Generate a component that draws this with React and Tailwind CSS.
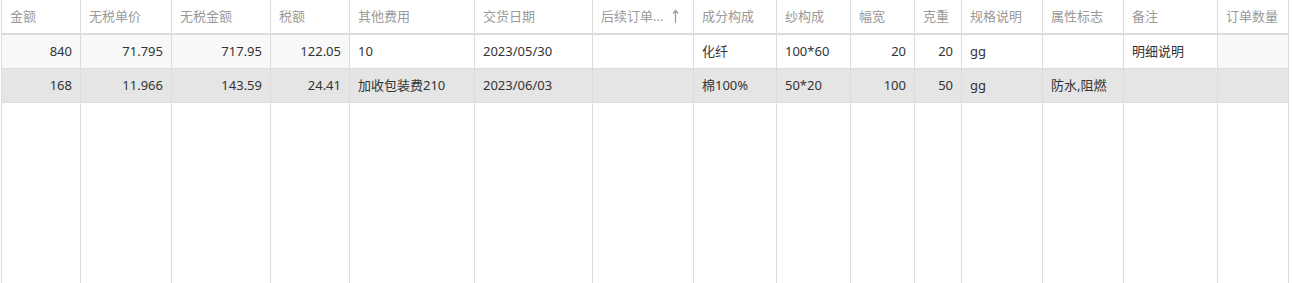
import React from "react";

const columns = [
  { key: "amount", title: "金额", width: "w-[79px]", align: "right", shade: true },
  { key: "price", title: "无税单价", width: "w-[91px]", align: "right", shade: true },
  { key: "net", title: "无税金额", width: "w-[99px]", align: "right", shade: true },
  { key: "tax", title: "税额", width: "w-[79px]", align: "right", shade: true },
  { key: "other", title: "其他费用", width: "w-[125px]" },
  { key: "date", title: "交货日期", width: "w-[118px]" },
  { key: "next", title: "后续订单号", width: "w-[101px]", sort: true },
  { key: "comp", title: "成分构成", width: "w-[83px]" },
  { key: "yarn", title: "纱构成", width: "w-[74px]" },
  { key: "wide", title: "幅宽", width: "w-[64px]", align: "right" },
  { key: "gram", title: "克重", width: "w-[47px]", align: "right" },
  { key: "spec", title: "规格说明", width: "w-[81px]" },
  { key: "attr", title: "属性标志", width: "w-[81px]" },
  { key: "note", title: "备注", width: "w-[94px]" },
  { key: "qty", title: "订单数量", width: "w-[71px]", shade: true },
];

const rows = [
  {
    amount: "840",
    price: "71.795",
    net: "717.95",
    tax: "122.05",
    other: "10",
    date: "2023/05/30",
    next: "",
    comp: "化纤",
    yarn: "100*60",
    wide: "20",
    gram: "20",
    spec: "gg",
    attr: "",
    note: "明细说明",
    qty: "",
  },
  {
    amount: "168",
    price: "11.966",
    net: "143.59",
    tax: "24.41",
    other: "加收包装费210",
    date: "2023/06/03",
    next: "",
    comp: "棉100%",
    yarn: "50*20",
    wide: "100",
    gram: "50",
    spec: "gg",
    attr: "防水,阻燃",
    note: "",
    qty: "",
    selected: true,
  },
];

const SortUp = () => (
  <svg width="9" height="15" viewBox="0 0 9 15" className="shrink-0">
    <path d="M4.5 1.5 V14" stroke="#9a9a9a" strokeWidth="1.2" />
    <path d="M2 4.5 L4.5 1.5 L7 4.5" stroke="#9a9a9a" strokeWidth="1.2" fill="none" />
  </svg>
);

export default function App() {
  return (
    <div
      className="h-[283px] w-[1292px] bg-white overflow-hidden text-[13px]"
      style={{ fontFamily: '"Noto Sans", "Noto Sans CJK SC", sans-serif' }}
    >
      <div className="flex h-full ml-px border-l border-[#dcdcdc] w-fit">
        {columns.map((col) => (
          <div
            key={col.key}
            className={`${col.width} shrink-0 flex flex-col border-r border-[#dcdcdc]`}
          >
            <div className="h-[35px] border-b-2 border-[#dcdcdc] flex items-center px-2 text-[#9a9a9a]">
              {col.sort ? (
                <div className="flex items-center w-full gap-2 pr-1">
                  <span className="truncate">后续订单...</span>
                  <SortUp />
                </div>
              ) : (
                <span className="whitespace-nowrap">{col.title}</span>
              )}
            </div>
            {rows.map((row, i) => (
              <div
                key={i}
                className={`h-[34px] border-b border-[#dcdcdc] flex items-center px-2 text-[#333] whitespace-nowrap ${
                  col.align === "right" ? "justify-end" : ""
                } ${
                  row.selected
                    ? "bg-[#e5e5e5]"
                    : col.shade
                    ? "bg-[#f8f8f8]"
                    : "bg-white"
                }`}
              >
                {row[col.key]}
              </div>
            ))}
            <div className="flex-1" />
          </div>
        ))}
      </div>
    </div>
  );
}
